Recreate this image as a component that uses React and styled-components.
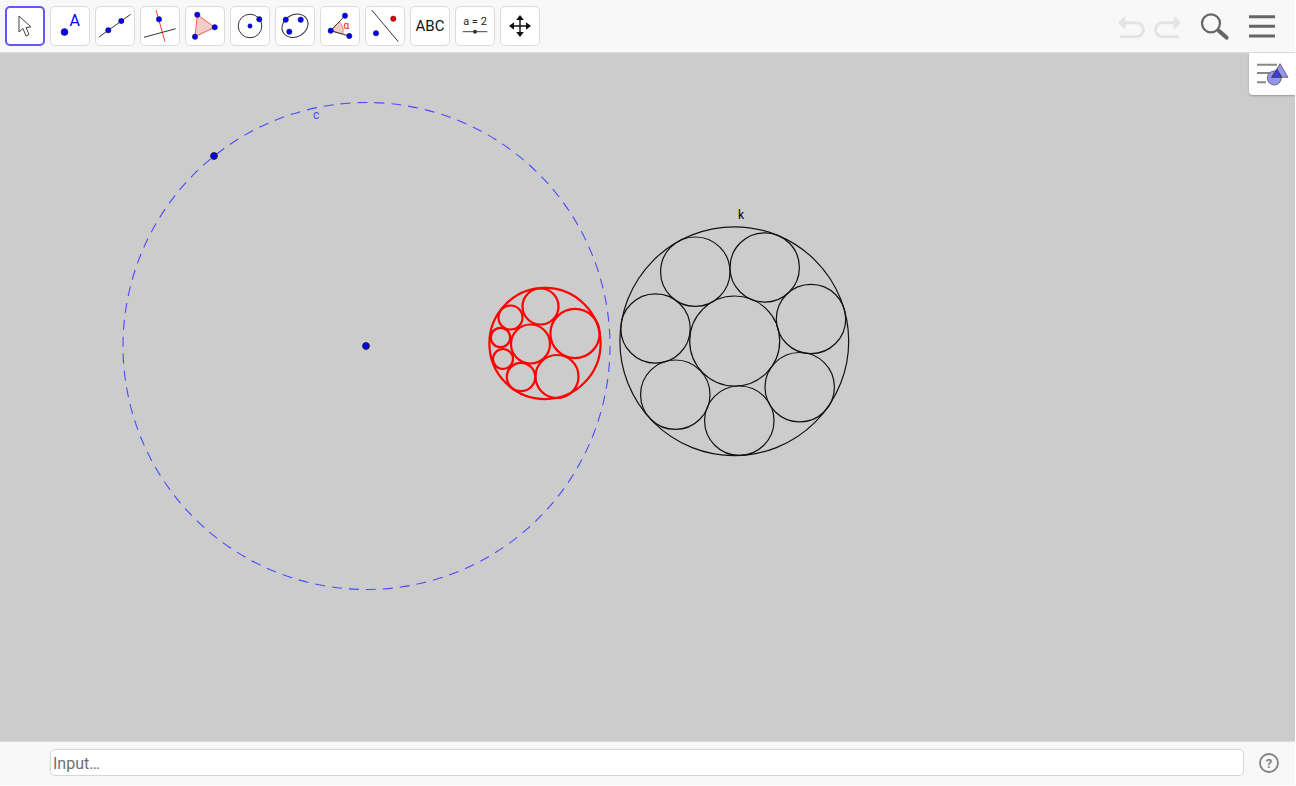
import styled, { createGlobalStyle } from "styled-components";

const GlobalStyle = createGlobalStyle`
  html, body {
    margin: 0;
    padding: 0;
    background: #fff;
    font-family: Roboto, "Liberation Sans", sans-serif;
  }
`;

const BLUE_POINT = "#0000ff";

const Applet = styled.div`
  width: 1295px;
  height: 785px;
  display: flex;
  flex-direction: column;
  overflow: hidden;
`;

const Toolbar = styled.div`
  height: 52px;
  flex: none;
  display: flex;
  align-items: center;
  justify-content: space-between;
  padding: 0 19px 0 5px;
  background: #f8f8f8;
  border-bottom: 1px solid #dcdcdc;
`;

const ToolGroup = styled.div`
  display: flex;
  gap: 5px;
`;

const ToolButton = styled.div`
  width: 40px;
  height: 40px;
  box-sizing: border-box;
  background: #fff;
  border: ${(p) => (p.$active ? "2px solid #6557f5" : "1px solid #dcdcdc")};
  border-radius: 5px;
  display: flex;
  align-items: center;
  justify-content: center;
  color: #111;
  font-size: 15px;
`;

const ActionGroup = styled.div`
  display: flex;
  align-items: center;
`;

const ActionIcon = styled.svg`
  display: block;
  margin-left: ${(p) => p.$gap || 0}px;
`;

const Canvas = styled.div`
  flex: 1;
  position: relative;
  background: #cccccc;
`;

const Drawing = styled.svg`
  display: block;
  width: 100%;
  height: 100%;
`;

const StyleTab = styled.div`
  position: absolute;
  top: 0;
  right: 0;
  width: 46px;
  height: 42px;
  background: #fff;
  border-bottom-left-radius: 4px;
  box-shadow: 0 1px 2px rgba(0, 0, 0, 0.25);
  display: flex;
  align-items: center;
  justify-content: center;
`;

const InputBar = styled.div`
  height: 44px;
  flex: none;
  box-sizing: border-box;
  display: flex;
  align-items: center;
  gap: 15px;
  padding: 0 16px 2px 50px;
  background: #f8f8f8;
  border-top: 1px solid #dcdcdc;
`;

const InputField = styled.div`
  flex: 1;
  height: 27px;
  box-sizing: border-box;
  background: #fff;
  border: 1px solid #d6d6d6;
  border-radius: 5px;
  padding: 1px 0 0 2px;
  display: flex;
  align-items: center;
  color: #6e6e6e;
  font-size: 16px;
`;

const Dot = ({ x, y, r = 2.7, fill = BLUE_POINT, line = 0.5 }) => (
  <circle cx={x} cy={y} r={r} fill={fill} stroke="#223" strokeWidth={line} />
);

const ToolIcon = ({ children }) => (
  <svg width="40" height="40" viewBox="0 0 40 40" style={{ flex: "none" }}>
    {children}
  </svg>
);

const blackCircles = [
  [734.3, 288.2, 114.4],
  [734.7, 288, 45],
  [695.3, 218.7, 34.7],
  [764.7, 214.5, 34.7],
  [811, 266, 34.7],
  [799.7, 334.2, 34.7],
  [739.3, 367.7, 34.7],
  [675.3, 341.7, 34.7],
  [655.5, 275.5, 34.7],
];

const redCircles = [
  [545, 290.5, 55.6],
  [575, 280.5, 24.6],
  [540.5, 253.5, 18],
  [510.5, 264.5, 12],
  [500.5, 284.5, 9.7],
  [503, 306, 10],
  [521, 324, 14.2],
  [557, 323.5, 21.5],
  [530.5, 291, 19.5],
];

export default function App() {
  return (
    <Applet>
      <GlobalStyle />
      <Toolbar>
        <ToolGroup>
          <ToolButton $active>
            <svg width="36" height="36" viewBox="2 2 36 36">
              <path d="M14 10 L14 26 L18 22.5 L21 30 L24 28.5 L21 21.5 L26 21 Z" fill="#fff" stroke="#444" strokeWidth="1" strokeLinejoin="round" />
            </svg>
          </ToolButton>
          <ToolButton>
            <ToolIcon>
              <Dot x={14.5} y={26} r={3.5} />
              <text x="19.5" y="20" fontSize="16" fill={BLUE_POINT} fontFamily="Roboto, sans-serif">A</text>
            </ToolIcon>
          </ToolButton>
          <ToolButton>
            <ToolIcon>
              <line x1="4" y1="31" x2="35.7" y2="8.3" stroke="#333" strokeWidth="1" />
              <Dot x={13.3} y={24.3} />
              <Dot x={26.3} y={15} />
            </ToolIcon>
          </ToolButton>
          <ToolButton>
            <ToolIcon>
              <line x1="16" y1="4" x2="25" y2="35.7" stroke="#e8403c" strokeWidth="1" />
              <line x1="4" y1="31.3" x2="35.7" y2="22.7" stroke="#333" strokeWidth="1" />
              <Dot x={19} y={13.3} />
            </ToolIcon>
          </ToolButton>
          <ToolButton>
            <ToolIcon>
              <polygon points="12.3,8.7 29.7,21.3 10,30.7" fill="#f2cdc8" stroke="#e8605c" strokeWidth="1" />
              <Dot x={12.3} y={8.7} />
              <Dot x={29.7} y={21.3} />
              <Dot x={10} y={30.7} />
            </ToolIcon>
          </ToolButton>
          <ToolButton>
            <ToolIcon>
              <circle cx="20" cy="20" r="11.8" fill="none" stroke="#333" strokeWidth="1" />
              <Dot x={20} y={20} r={2.2} />
              <Dot x={29.3} y={13.3} />
            </ToolIcon>
          </ToolButton>
          <ToolButton>
            <ToolIcon>
              <ellipse cx="20" cy="19.8" rx="13.6" ry="11" transform="rotate(-30 20 19.8)" fill="none" stroke="#333" strokeWidth="1" />
              <Dot x={10.7} y={13.7} />
              <Dot x={25.7} y={13.7} />
              <Dot x={14.3} y={25.7} />
            </ToolIcon>
          </ToolButton>
          <ToolButton>
            <ToolIcon>
              <path d="M10.7 24.7 L19.3 15.7 A12.5 12.5 0 0 1 22.7 28.1 Z" fill="#f2cdc8" stroke="#e8605c" strokeWidth="0.8" />
              <line x1="10.7" y1="24.7" x2="25" y2="9.7" stroke="#333" strokeWidth="1" />
              <line x1="10.7" y1="24.7" x2="29.3" y2="30" stroke="#333" strokeWidth="1" />
              <text x="23.5" y="22.5" fontSize="10" fill="#e02020" fontFamily="Roboto, sans-serif">α</text>
              <Dot x={10.7} y={24.7} />
              <Dot x={25} y={9.7} />
              <Dot x={29.3} y={30} />
            </ToolIcon>
          </ToolButton>
          <ToolButton>
            <ToolIcon>
              <line x1="6.7" y1="4" x2="33.3" y2="35.7" stroke="#333" strokeWidth="1" />
              <Dot x={28.3} y={12.7} fill="#ee0000" />
              <Dot x={11} y={27.3} />
            </ToolIcon>
          </ToolButton>
          <ToolButton>ABC</ToolButton>
          <ToolButton>
            <ToolIcon>
              <text x="20" y="19" fontSize="11" fill="#222" textAnchor="middle" fontFamily="Roboto, sans-serif">a = 2</text>
              <line x1="7.7" y1="25.7" x2="32.3" y2="25.7" stroke="#444" strokeWidth="1" />
              <circle cx="20" cy="25.7" r="2" fill="#333" />
            </ToolIcon>
          </ToolButton>
          <ToolButton>
            <ToolIcon>
              <path d="M20 11 V29 M11 20 H29" stroke="#111" strokeWidth="1.4" />
              <path d="M20 9 L16.2 14 H23.8 Z M20 31 L16.2 26 H23.8 Z M9 20 L14 16.2 V23.8 Z M31 20 L26 16.2 V23.8 Z" fill="#111" />
            </ToolIcon>
          </ToolButton>
        </ToolGroup>
        <ActionGroup>
          <ActionIcon width="29" height="24" viewBox="0 0 29 24">
            <path d="M1 8.7 L8.3 1.7 V16 Z" fill="#e4e4e4" />
            <path d="M7 8.7 H19.5 A7 7 0 0 1 19.5 22.7 H3" fill="none" stroke="#e4e4e4" strokeWidth="3" />
          </ActionIcon>
          <ActionIcon $gap={8} width="29" height="24" viewBox="0 0 29 24">
            <path d="M27 8.7 L19.7 1.7 V16 Z" fill="#e4e4e4" />
            <path d="M21 8.7 H8.5 A7 7 0 0 0 8.5 22.7 H25" fill="none" stroke="#e4e4e4" strokeWidth="3" />
          </ActionIcon>
          <ActionIcon $gap={18} width="30" height="30" viewBox="0 0 30 30">
            <circle cx="10" cy="12.3" r="9" fill="none" stroke="#666" strokeWidth="2.2" />
            <path d="M18 20 L25.5 26.5" stroke="#666" strokeWidth="4.2" strokeLinecap="round" />
          </ActionIcon>
          <ActionIcon $gap={17} width="28" height="24" viewBox="0 0 28 24">
            <path d="M1 2.7 H27 M1 12.3 H27 M1 22 H27" stroke="#666" strokeWidth="3" />
          </ActionIcon>
        </ActionGroup>
      </Toolbar>
      <Canvas>
        <Drawing viewBox="0 53 1295 688" preserveAspectRatio="xMinYMin">
          <g transform="translate(0 53)">
            <circle cx="366.5" cy="293" r="243.5" fill="none" stroke="#4a4aff" strokeWidth="1.1" strokeDasharray="10 7" strokeDashoffset="1" />
            {redCircles.map(([cx, cy, r]) => (
              <circle key={`${cx}-${cy}`} cx={cx} cy={cy} r={r} fill="none" stroke="#ff0000" strokeWidth="2.2" />
            ))}
            {blackCircles.map(([cx, cy, r]) => (
              <circle key={`${cx}-${cy}`} cx={cx} cy={cy} r={r} fill="none" stroke="#111" strokeWidth="1.2" />
            ))}
            <Dot x={214} y={103} r={3.4} line={1} />
            <Dot x={366} y={293} r={3.4} line={1} />
            <text x="313" y="66" fontSize="12" fill="#4a4aff" fontFamily="Roboto, sans-serif">c</text>
            <text x="738" y="166" fontSize="12" fill="#000" fontFamily="Roboto, sans-serif">k</text>
          </g>
        </Drawing>
        <StyleTab>
          <svg width="36" height="32" viewBox="0 0 36 32">
            <path d="M3 6.7 H23 M3 15 H16 M3 24.3 H12" stroke="#888" strokeWidth="2" />
            <polygon points="26,5.7 34,19.3 18,19.3" fill="#9494ec" stroke="#555" strokeWidth="0.8" />
            <circle cx="20.3" cy="20" r="7" fill="#9494ec" stroke="#555" strokeWidth="0.8" />
            <polygon points="23,11 27.5,19.3 17.5,19.3" fill="#3c3cf0" stroke="#333" strokeWidth="0.8" />
          </svg>
        </StyleTab>
      </Canvas>
      <InputBar>
        <InputField>Input…</InputField>
        <svg width="20" height="20" viewBox="0 0 20 20">
          <circle cx="10" cy="10" r="9" fill="none" stroke="#808080" strokeWidth="1.8" />
          <text x="10" y="14.6" fontSize="13" fontWeight="700" fill="#808080" textAnchor="middle" fontFamily="Roboto, sans-serif">?</text>
        </svg>
      </InputBar>
    </Applet>
  );
}
